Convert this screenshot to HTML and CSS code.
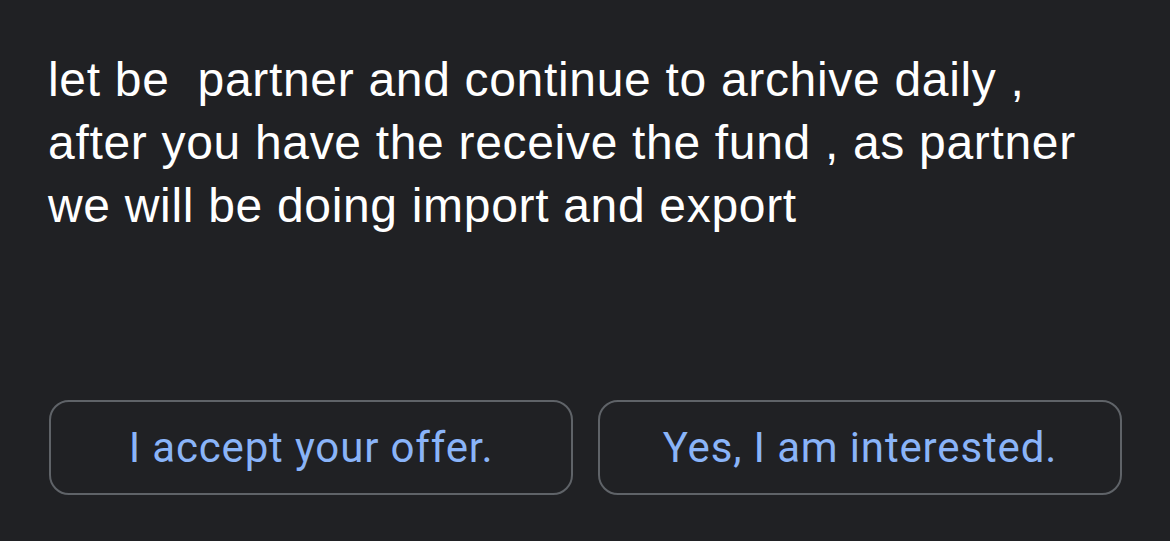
FILE: index.html
```html
<!DOCTYPE html>
<html>
<head>
<meta charset="utf-8">
<link rel="stylesheet" href="styles.css">
</head>
<body>
<div class="screen">
  <p class="message">let be&nbsp; partner and continue to archive daily ,<br>after you have the receive the fund , as partner<br>we will be doing import and export</p>
  <div class="replies">
    <button class="reply">I accept your offer.</button>
    <button class="reply">Yes, I am interested.</button>
  </div>
</div>
</body>
</html>
```
FILE: styles.css
```css
html, body {
  margin: 0;
  padding: 0;
  background: #202124;
}
.screen {
  box-sizing: border-box;
  height: 541px;
  width: 1170px;
  padding: 48px 48px 46px 48px;
  display: flex;
  flex-direction: column;
  justify-content: space-between;
}
.message {
  margin: 0;
  color: #ffffff;
  font-family: "Liberation Sans", Arial, sans-serif;
  font-size: 48px;
  letter-spacing: 0.68px;
  line-height: 63px;
  white-space: nowrap;
}
.replies {
  display: flex;
  gap: 25px;
  padding-left: 1px;
}
.reply {
  flex: 1;
  height: 95px;
  background: transparent;
  border: 2px solid #5f6368;
  border-radius: 20px;
  color: #8ab4f8;
  font-family: Roboto, "Open Sans", sans-serif;
  font-size: 42px;
  letter-spacing: 0.85px;
  padding: 0;
  cursor: pointer;
}
```
